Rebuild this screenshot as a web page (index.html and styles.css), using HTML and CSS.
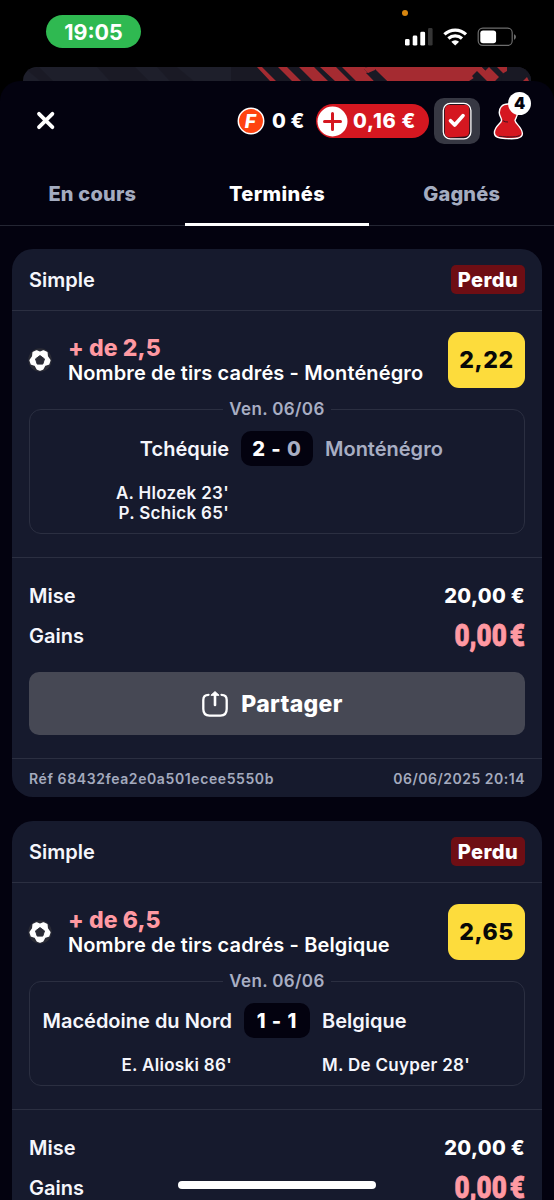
FILE: index.html
```html
<!DOCTYPE html>
<html lang="fr">
<head>
<meta charset="utf-8">
<title>Mes paris</title>
<link rel="stylesheet" href="styles.css">
</head>
<body>
<svg class="defs" width="0" height="0">
  <symbol id="ball" viewBox="0 0 24 24">
    <circle cx="12" cy="12" r="11.7" fill="#2b2c36"/>
    <path d="M8.6 3.2 12 4.6 15.4 3.2 18.6 4.6 19 8.6 21.6 12.4 20.4 15.8 16.6 17 14.6 20.8 12 21.8 9.4 20.8 7.4 17 3.6 15.8 2.4 12.4 5 8.6 5.4 4.6Z" fill="#fff" stroke="#fff" stroke-width="2" stroke-linejoin="round"/>
    <path d="M12 7.6 16.5 10.9 14.8 16.1H9.2L7.5 10.9Z" fill="#2b2c36" stroke="#2b2c36" stroke-linejoin="round"/>
  </symbol>
</svg>
<div class="phone">
  <div class="status">
    <span class="clock">19:05</span>
    <i class="mic"></i>
    <svg class="indicators" width="114" height="22" viewBox="0 0 114 22">
      <g fill="#fff"><rect x="1" y="13" width="4.6" height="6.6" rx="1.4"/><rect x="8.7" y="9.6" width="4.6" height="10" rx="1.4"/><rect x="16.3" y="5.7" width="4.8" height="13.9" rx="1.4"/></g>
      <rect x="24" y="2" width="4.6" height="17.6" rx="1.4" fill="#353535"/>
      <g fill="none" stroke="#fff" stroke-width="3.2"><path d="M40.4 8.3A15.8 15.8 0 0 1 62 8.3"/><path d="M44.4 12.5A10 10 0 0 1 58 12.5"/></g>
      <path d="M47.3 15.7A5.8 5.8 0 0 1 55.1 15.7L51.2 19.6Z" fill="#fff"/>
      <rect x="74.2" y="2.2" width="34" height="17.2" rx="4.6" fill="none" stroke="#6d6d6d" stroke-width="1.2"/>
      <rect x="76.3" y="4.5" width="15.8" height="12.8" rx="2.8" fill="#fff"/>
      <path d="M110 8.3C112.6 9 112.6 13 110 13.7Z" fill="#6d6d6d"/>
    </svg>
  </div>
  <svg class="peek" width="508" height="24" viewBox="0 0 508 24">
    <rect width="508" height="40" rx="14" fill="#1e1f2b"/>
    <path d="M208 0H494A14 14 0 0 1 508 14V24H208Z" fill="#191924"/>
    <path d="M4 3 24 20H36L16 0ZM74 0 92 20H132L112 0ZM134 0 152 20H178L154 0Z" fill="#191924" opacity=".75"/>
    <g fill="#a52b31"><path d="M234 0H239L253 14H247ZM255 0H264L278 14H269ZM276 0H291L305 14H290ZM297 0H313L327 14H312ZM319 0H484V4L479 7 472 0H459L473 14H459L454 9 446 14H364L352 3 345 7 351 14H333Z"/><path d="M500 14 504 10 506 14Z"/></g>
    <path d="M343 0 341 2 345 6 349 2ZM343 6 352 2 364 14H351ZM449 9 454 4 464 14H453ZM459 0H474L480 6 478 14H473Z" fill="#191924"/>
    <path d="M345 0H352V3L345 6 340 1ZM462 4 466 0 476 10 472 14Z" fill="#a52b31"/>
  </svg>
  <main class="sheet">
    <header class="topbar">
      <svg class="close" width="20" height="20" viewBox="0 0 20 20"><path d="M3 2.8 16.4 16.2M16.4 2.8 3 16.2" stroke="#fff" stroke-width="3.8" stroke-linecap="round"/></svg>
      <div class="free"><svg width="28" height="28" viewBox="0 0 28 28"><circle cx="14" cy="14" r="12.7" fill="#ff4310" stroke="#fff" stroke-width="1.5"/><text x="13.5" y="20.7" text-anchor="middle" class="coin">F</text></svg><span>0 €</span></div>
      <div class="balance"><svg width="31" height="31" viewBox="0 0 31 31"><circle cx="15.5" cy="15.5" r="15" fill="#fff"/><path d="M15.5 7.5V23.5M7.5 15.5H23.5" stroke="#d51720" stroke-width="3" stroke-linecap="round"/></svg><span>0,16 €</span></div>
      <div class="bets"><svg width="46" height="46" viewBox="0 0 46 46"><rect x="9.3" y="5.4" width="27.6" height="35.4" rx="7" fill="#26131c" stroke="#fff" stroke-width="1.3"/><path d="M15.5 39.4C12 39 10.8 37 10.8 34V13C10.8 8.6 12.5 7 16 7H31C34.2 7 35.2 9 35.2 12V33C35.2 37 33.5 38.2 30.5 38.5Z" fill="#d51720"/><path d="M16.5 22.7 20.7 27 29 17.6" stroke="#fff" stroke-width="3.7" stroke-linecap="round" stroke-linejoin="round" fill="none"/></svg></div>
      <div class="profile"><svg width="32" height="38" viewBox="0 0 32 38"><path d="M15 2C9 2 6 6 6.3 11C6.5 14 8.6 16 8.6 18.4C8 22 1.4 24 1.4 31C1.6 36.4 8 36.2 14 36.6C21 37 29.5 37 29.4 31.5C29 25 22.4 22 22 18.5C22.4 16 24.6 15 24.6 10C24.4 5 21 2 15 2Z" fill="#d51720" stroke="#fff" stroke-width="1.4"/><path d="M9.8 18.6Q12 20.2 15 20M27.6 32.6C26 35.4 16 35.4 6 34.2" fill="none" stroke="#3c1420" stroke-width="1"/></svg><b class="badge">4</b></div>
    </header>
    <nav class="tabs"><a class="tab">En cours</a><a class="tab active">Terminés</a><a class="tab">Gagnés</a></nav>
    <section class="cards">
      <article class="card">
        <div class="card-head"><span>Simple</span><b class="lost">Perdu</b></div>
        <div class="bet">
          <div class="pick"><svg class="ball" width="24" height="24"><use href="#ball"/></svg><div class="pick-text"><b class="choice">+ de 2,5</b><span class="market">Nombre de tirs cadrés - Monténégro</span></div><b class="odds">2,22</b></div>
          <fieldset class="match"><legend>Ven. 06/06</legend>
            <div class="grid"><span class="home">Tchéquie</span><b class="score">2 - <i>0</i></b><span class="away muted">Monténégro</span>
            <div class="scorers left">A. Hlozek 23'<br>P. Schick 65'</div><div class="scorers right"></div></div>
          </fieldset>
        </div>
        <div class="totals">
          <div class="line"><span>Mise</span><b class="stake">20,00 €</b></div>
          <div class="line"><span>Gains</span><b class="gain">0,00 €</b></div>
          <button class="share"><svg width="28" height="28" viewBox="0 0 28 28"><path d="M7.5 4.8C4 4.8 2.3 6.5 2.3 10V19C2.3 23.5 4 25.6 8.5 25.6H19.5C24 25.6 25.7 23.5 25.7 19V10C25.7 6.5 24 4.8 20.5 4.8" fill="none" stroke="#fff" stroke-width="2.3" stroke-linecap="round"/><path d="M14 5V15" stroke="#fff" stroke-width="2.6" stroke-linecap="round"/><path d="M14 1.6 18.1 5.3H9.9Z" fill="#fff" stroke="#fff" stroke-linejoin="round"/></svg><span>Partager</span></button>
        </div>
        <footer class="card-foot"><span class="ref">Réf 68432fea2e0a501ecee5550b</span><span class="date">06/06/2025 20:14</span></footer>
      </article>
      <article class="card">
        <div class="card-head"><span>Simple</span><b class="lost">Perdu</b></div>
        <div class="bet">
          <div class="pick"><svg class="ball" width="24" height="24"><use href="#ball"/></svg><div class="pick-text"><b class="choice">+ de 6,5</b><span class="market">Nombre de tirs cadrés - Belgique</span></div><b class="odds">2,65</b></div>
          <fieldset class="match short"><legend>Ven. 06/06</legend>
            <div class="grid"><span class="home">Macédoine du Nord</span><b class="score even">1 - 1</b><span class="away">Belgique</span>
            <div class="scorers left">E. Alioski 86'</div><div class="scorers right">M. De Cuyper 28'</div></div>
          </fieldset>
        </div>
        <div class="totals">
          <div class="line"><span>Mise</span><b class="stake">20,00 €</b></div>
          <div class="line"><span>Gains</span><b class="gain">0,00 €</b></div>
        </div>
      </article>
    </section>
  </main>
  <div class="home-bar"></div>
</div>
</body>
</html>
```
FILE: styles.css
```css
* { box-sizing: border-box; }
body { margin: 0; background: #000; font-family: Inter, "Liberation Sans", sans-serif; color: #f5f6fc; }
.defs { position: absolute; }
.phone { position: relative; width: 554px; height: 1200px; overflow: hidden; background: #000; }
.status { position: relative; height: 67px; padding: 15px 36px 0 46px; display: flex; justify-content: space-between; align-items: flex-start; }
.clock { width: 95px; height: 33px; border-radius: 17px; background: #2fb951; color: #fff; font-size: 21.5px; font-weight: 650; line-height: 34px; text-align: center; }
.mic { position: absolute; left: 402px; top: 10px; width: 6px; height: 6px; border-radius: 50%; background: #d8860f; }
.indicators { margin-top: 11px; }
.peek { display: block; margin: 0 0 -10px 23px; }
.sheet { position: relative; height: 1119px; background: #03020f; border-radius: 20px 20px 0 0; }
.topbar { height: 80px; padding: 0 28px 0 36px; display: flex; align-items: center; color: #fff; font-weight: 850; font-size: 20px; }
.close { margin-right: 181px; }
.free { display: flex; align-items: center; gap: 7px; width: 79px; white-space: nowrap; letter-spacing: .2px; }
.coin { font: italic 800 19px Inter, sans-serif; fill: #fff; }
.balance { display: flex; align-items: center; gap: 5px; width: 113px; height: 34px; padding-left: 1px; border-radius: 17px; background: #d51720; white-space: nowrap; letter-spacing: .75px; }
.bets { width: 46px; height: 46px; margin-left: 5px; border-radius: 10px; background: #373843; }
.bets svg { display: block; }
.profile { position: relative; margin: 0 0 0 13px; width: 32px; height: 38px; }
.badge { position: absolute; left: 15px; top: -10px; width: 23px; height: 23px; border-radius: 50%; background: #fff; color: #05040e; text-align: center; font-size: 16px; line-height: 23px; }
.tabs { height: 65px; display: grid; grid-template-columns: 1fr 1fr 1fr; border-bottom: 1px solid #242633; }
.tab { height: 65px; padding-top: 21px; text-align: center; font-size: 20px; line-height: 24px; font-weight: 850; color: #a4acc0; letter-spacing: .2px; }
.tab.active { color: #fff; border-bottom: 3px solid #fff; letter-spacing: .4px; }
.cards { padding: 23px 12px; display: grid; gap: 24px; }
.card { background: #161a2d; border-radius: 21px; }
.card-head { height: 62px; padding: 0 17px; display: flex; align-items: center; justify-content: space-between; border-bottom: 1px solid #2b2f41; font-size: 20px; font-weight: 600; }
.lost { height: 29px; width: 74px; padding-top: 1px; text-align: center; border-radius: 5px; background: #6e0e14; color: #fff; font-weight: 850; line-height: 28px; letter-spacing: .5px; }
.bet { padding: 20px 17px 23px; border-bottom: 1px solid #2b2f41; }
.pick { display: flex; align-items: center; height: 57px; }
.ball { margin: 0 16px 0 -1px; }
.pick-text { flex: 1; display: grid; padding-top: 1px; white-space: nowrap; }
.choice { font-size: 23px; line-height: 26px; font-weight: 850; color: #ff99a2; letter-spacing: .1px; }
.market { font-size: 20px; line-height: 25px; font-weight: 600; color: #fff; letter-spacing: .12px; }
.odds { width: 77px; height: 56px; border-radius: 11px; background: #fddc3c; color: #080808; font-size: 23px; line-height: 57px; font-weight: 850; text-align: center; letter-spacing: .6px; }
.match { margin: 10px 0 0; padding: 0 12px; min-width: 0; height: 136px; border: 1px solid #2b2f41; border-radius: 12px; }
.match.short { height: 116px; }
legend { margin: 0 auto; padding: 0 6px; height: 22px; font-size: 17px; line-height: 22px; font-weight: 600; color: #a8aec3; letter-spacing: .35px; }
.grid { display: grid; grid-template-columns: 1fr auto 1fr; column-gap: 12px; padding-top: 11px; align-items: center; font-size: 20px; font-weight: 600; white-space: nowrap; }
.home { text-align: right; }
.muted { color: #a8aec3; }
.score { width: 72px; height: 35px; border-radius: 10px; background: #03020f; color: #fff; font-weight: 850; line-height: 36px; text-align: center; letter-spacing: .9px; }
.score.even { width: 66px; }
.score i { font-style: normal; color: #a8aec3; }
.scorers { margin-top: 17px; font-size: 17px; line-height: 20px; letter-spacing: .3px; align-self: start; }
.left { grid-column: 1; text-align: right; }
.right { grid-column: 3; }
.totals { padding: 18px 17px 23px; }
.line { height: 40px; display: flex; align-items: center; justify-content: space-between; font-size: 20px; font-weight: 600; }
.stake { font-weight: 850; color: #fff; letter-spacing: .35px; }
.gain { font: 900 31px/40px Roboto, sans-serif; color: #ff99a2; -webkit-text-stroke: .8px #ff99a2; word-spacing: -4px; white-space: nowrap; transform: scaleX(.84); transform-origin: right center; }
.share { margin-top: 16px; width: 100%; height: 63px; padding: 0 10px 0 0; border: 0; border-radius: 10px; background: #464854; color: #fff; display: flex; align-items: center; justify-content: center; gap: 12px; font: 850 23px Inter, sans-serif; letter-spacing: .3px; }
.card-foot { height: 39px; padding: 0 17px; border-top: 1px solid #2b2f41; display: flex; align-items: center; justify-content: space-between; font-size: 14px; font-weight: 600; color: #a4aabe; letter-spacing: .6px; }
.date { letter-spacing: .5px; }
.home-bar { position: absolute; left: 178px; top: 1181px; width: 198px; height: 8px; border-radius: 4px; background: #fff; }
```
